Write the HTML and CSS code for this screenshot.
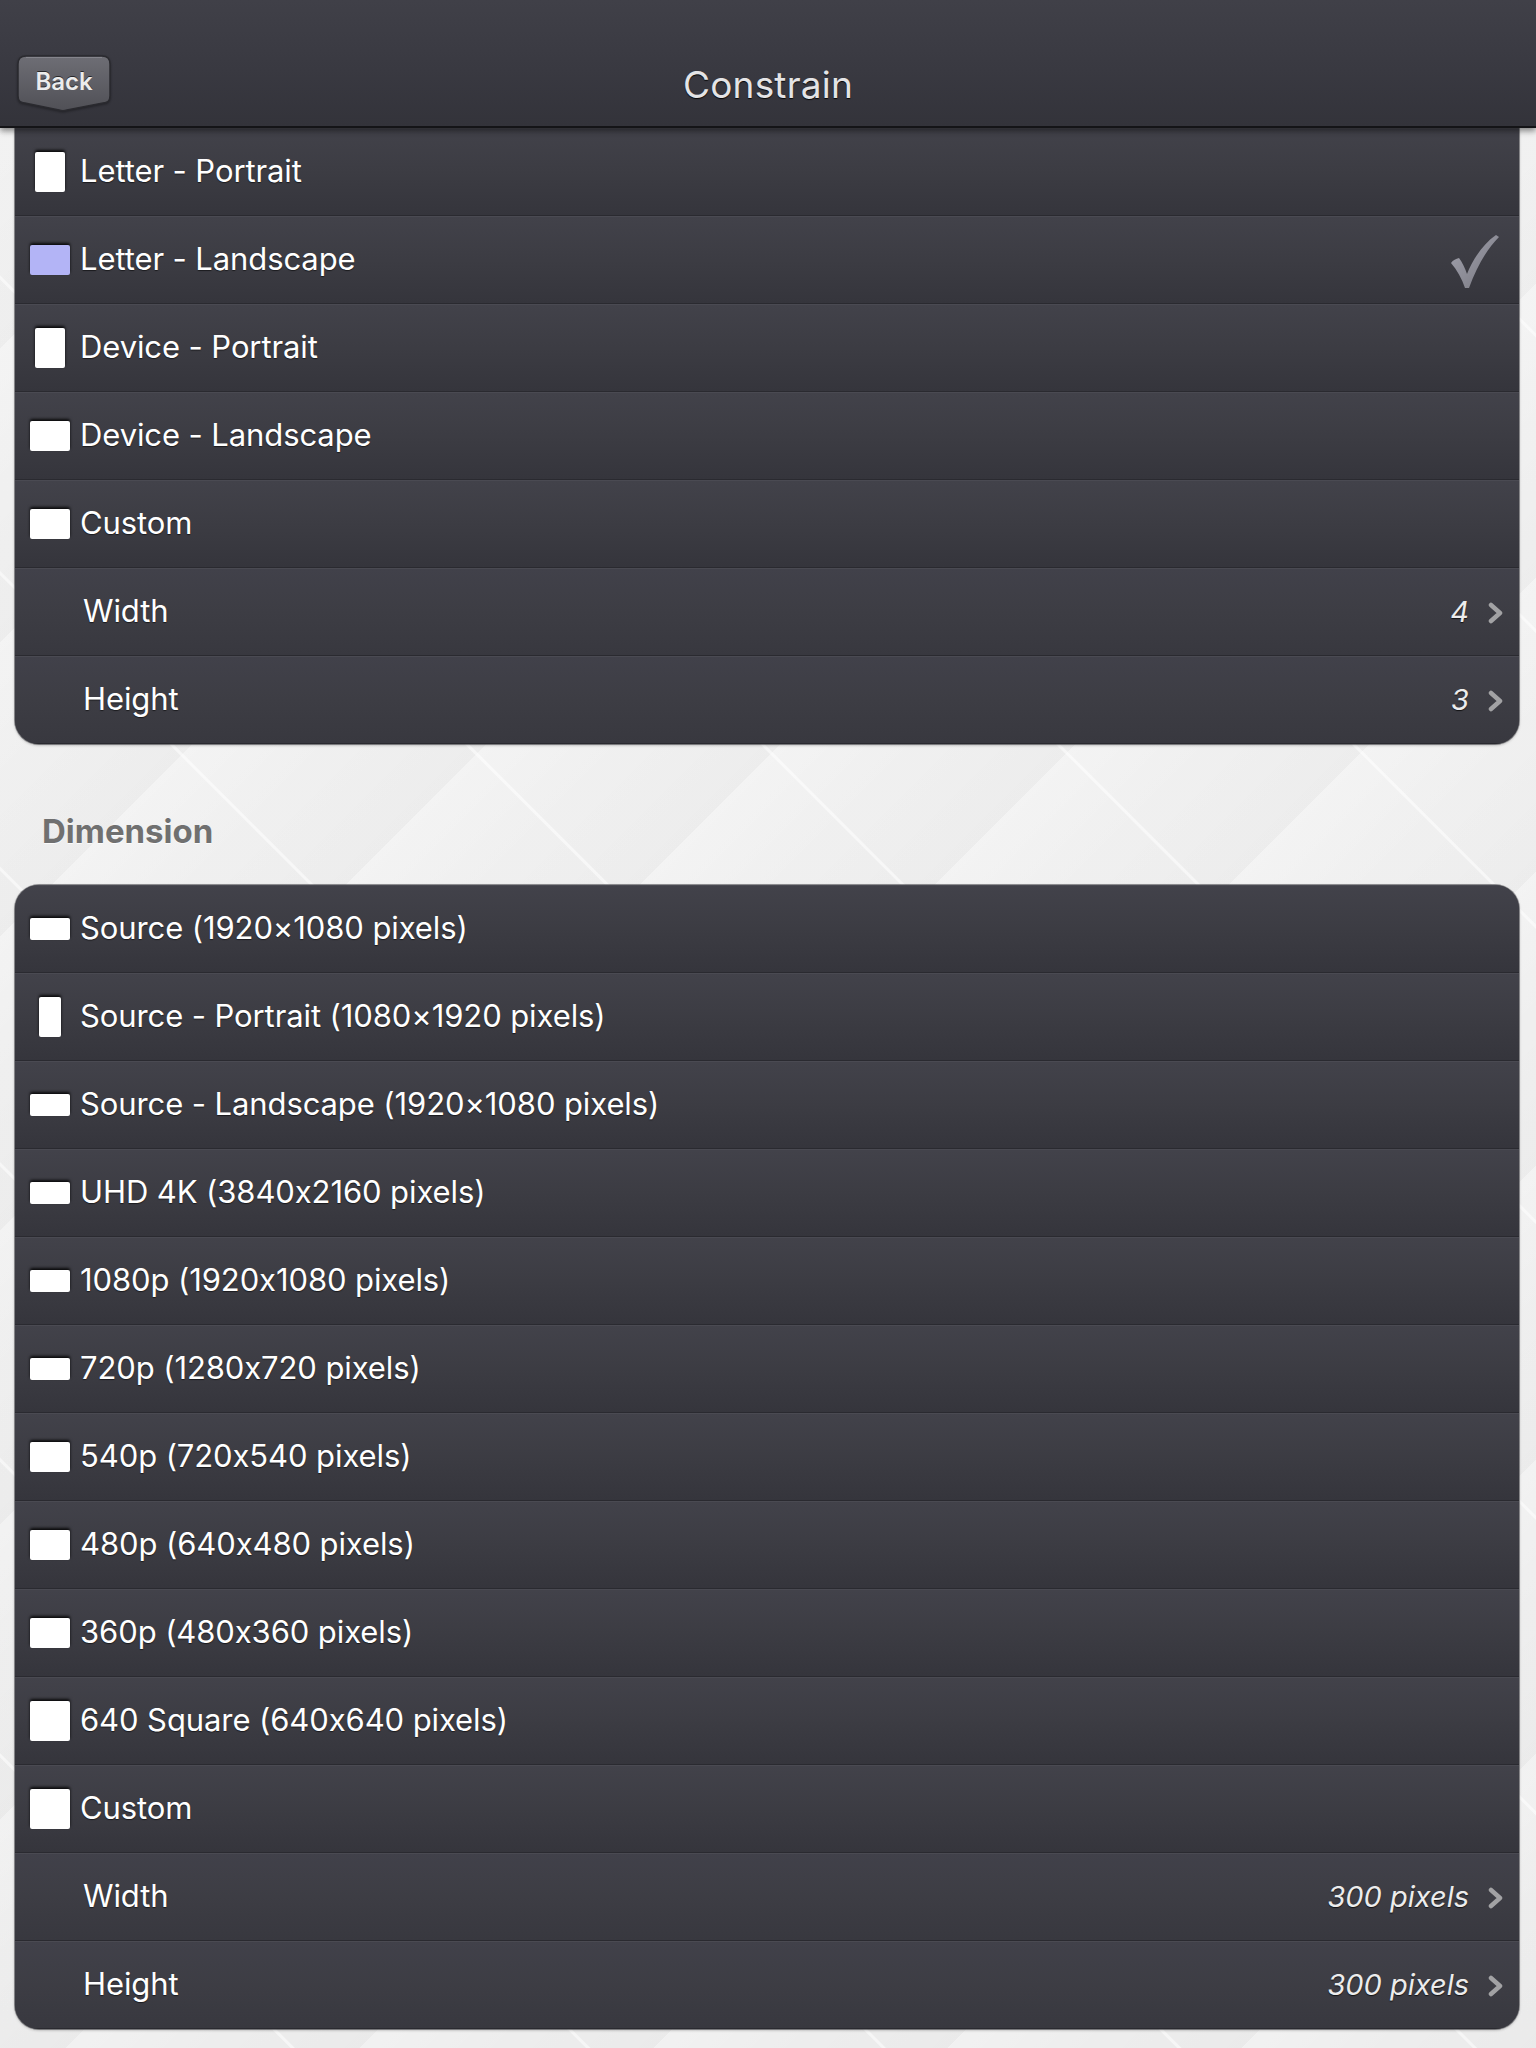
FILE: index.html
```html
<!DOCTYPE html>
<html lang="en">
<head>
<meta charset="utf-8">
<title>Constrain</title>
<link rel="stylesheet" href="styles.css">
</head>
<body>
<header class="navbar">
  <div class="nav-left">
    <button class="back-btn">
      <svg class="back-shape" width="94" height="58" viewBox="0 0 94 58">
        <defs>
          <linearGradient id="bg" x1="0" y1="0" x2="0" y2="1">
            <stop offset="0" stop-color="#6e6e75"/>
            <stop offset="1" stop-color="#505056"/>
          </linearGradient>
        </defs>
        <path d="M9,1 H85 Q93,1 93,9 V41 Q93,48 86,48 L50,55 Q46,56.5 42,55 L8,48 Q1,48 1,41 V9 Q1,1 9,1 Z" fill="url(#bg)" stroke="#2a2a2f" stroke-width="1.5"/>
        <path d="M9,2.5 H85" stroke="#85858c" stroke-width="1"/>
      </svg>
      <span class="back-label">Back</span>
    </button>
  </div>
  <h1 class="nav-title">Constrain</h1>
  <div class="nav-right"></div>
</header>

<main class="content">
  <section class="card card-top">
    <div class="row"><span class="icon"><i class="shape" style="width:30px;height:40px"></i></span><span class="label">Letter - Portrait</span></div>
    <div class="row"><span class="icon"><i class="shape selected" style="width:40px;height:30px"></i></span><span class="label">Letter - Landscape</span>
      <svg class="check" width="50" height="58" viewBox="0 0 50 58">
        <defs>
          <linearGradient id="cg" x1="0" y1="0" x2="1" y2="1">
            <stop offset="0" stop-color="#a4a4b0"/>
            <stop offset="1" stop-color="#77777f"/>
          </linearGradient>
        </defs>
        <path d="M2,31 C4,28 7,27 10,26 C13,30 16,36 18,42 C24,27 34,12 47,3 L50,5 C38,17 28,34 20,56 L16,56 C13,47 8,38 2,31 Z" fill="url(#cg)"/>
      </svg>
    </div>
    <div class="row"><span class="icon"><i class="shape" style="width:30px;height:40px"></i></span><span class="label">Device - Portrait</span></div>
    <div class="row"><span class="icon"><i class="shape" style="width:40px;height:30px"></i></span><span class="label">Device - Landscape</span></div>
    <div class="row"><span class="icon"><i class="shape" style="width:40px;height:30px"></i></span><span class="label">Custom</span></div>
    <div class="row row-value"><span class="label">Width</span><span class="value">4</span><svg class="chev" width="16" height="22" viewBox="0 0 16 22"><path d="M3,3 L12,11 L3,19" fill="none" stroke="#a2a2a4" stroke-width="4.5" stroke-linecap="round" stroke-linejoin="round"/></svg></div>
    <div class="row row-value"><span class="label">Height</span><span class="value">3</span><svg class="chev" width="16" height="22" viewBox="0 0 16 22"><path d="M3,3 L12,11 L3,19" fill="none" stroke="#a2a2a4" stroke-width="4.5" stroke-linecap="round" stroke-linejoin="round"/></svg></div>
  </section>

  <h2 class="section-title">Dimension</h2>

  <section class="card">
    <div class="row"><span class="icon"><i class="shape" style="width:40px;height:22px"></i></span><span class="label">Source (1920×1080 pixels)</span></div>
    <div class="row"><span class="icon"><i class="shape" style="width:22px;height:40px"></i></span><span class="label">Source - Portrait (1080×1920 pixels)</span></div>
    <div class="row"><span class="icon"><i class="shape" style="width:40px;height:22px"></i></span><span class="label">Source - Landscape (1920×1080 pixels)</span></div>
    <div class="row"><span class="icon"><i class="shape" style="width:40px;height:22px"></i></span><span class="label">UHD 4K (3840x2160 pixels)</span></div>
    <div class="row"><span class="icon"><i class="shape" style="width:40px;height:22px"></i></span><span class="label">1080p (1920x1080 pixels)</span></div>
    <div class="row"><span class="icon"><i class="shape" style="width:40px;height:22px"></i></span><span class="label">720p (1280x720 pixels)</span></div>
    <div class="row"><span class="icon"><i class="shape" style="width:40px;height:30px"></i></span><span class="label">540p (720x540 pixels)</span></div>
    <div class="row"><span class="icon"><i class="shape" style="width:40px;height:30px"></i></span><span class="label">480p (640x480 pixels)</span></div>
    <div class="row"><span class="icon"><i class="shape" style="width:40px;height:30px"></i></span><span class="label">360p (480x360 pixels)</span></div>
    <div class="row"><span class="icon"><i class="shape" style="width:40px;height:40px"></i></span><span class="label">640 Square (640x640 pixels)</span></div>
    <div class="row"><span class="icon"><i class="shape" style="width:40px;height:40px"></i></span><span class="label">Custom</span></div>
    <div class="row row-value"><span class="label">Width</span><span class="value">300 pixels</span><svg class="chev" width="16" height="22" viewBox="0 0 16 22"><path d="M3,3 L12,11 L3,19" fill="none" stroke="#a2a2a4" stroke-width="4.5" stroke-linecap="round" stroke-linejoin="round"/></svg></div>
    <div class="row row-value"><span class="label">Height</span><span class="value">300 pixels</span><svg class="chev" width="16" height="22" viewBox="0 0 16 22"><path d="M3,3 L12,11 L3,19" fill="none" stroke="#a2a2a4" stroke-width="4.5" stroke-linecap="round" stroke-linejoin="round"/></svg></div>
  </section>
</main>
</body>
</html>
```

FILE: styles.css
```css
* { box-sizing: border-box; }

html, body {
  margin: 0;
  padding: 0;
}

body {
  width: 1536px;
  min-height: 2048px;
  font-family: Inter, "Liberation Sans", sans-serif;
  font-feature-settings: "calt" 0;
  background-color: #efefef;
  background-image:
    repeating-linear-gradient(45deg, transparent 0, transparent 205px, rgba(255,255,255,0.55) 206px, rgba(255,255,255,0.55) 208px, transparent 209px),
    repeating-linear-gradient(-45deg, rgba(0,0,0,0.012) 0, transparent 104px, rgba(255,255,255,0.25) 208px),
    linear-gradient(180deg, #f1f1f1, #ededed);
  overflow: hidden;
}

/* ---------- Navigation bar ---------- */
.navbar {
  position: relative;
  z-index: 5;
  height: 128px;
  display: grid;
  grid-template-columns: 1fr auto 1fr;
  background: linear-gradient(180deg, #404048 0%, #393941 55%, #33333a 100%);
  border-bottom: 2px solid #141417;
  box-shadow: 0 3px 6px rgba(0, 0, 0, 0.45);
}

.nav-left {
  padding: 55px 0 0 17px;
}

.back-btn {
  position: relative;
  width: 94px;
  height: 58px;
  padding: 0;
  border: 0;
  background: transparent;
  display: block;
}

.back-shape {
  display: block;
  filter: drop-shadow(0 1px 1px rgba(0,0,0,0.35));
}

.back-label {
  position: absolute;
  left: 0;
  right: 0;
  top: 10px;
  text-align: center;
  font-family: Inter, "Liberation Sans", sans-serif;
  font-weight: 600;
  font-size: 24px;
  line-height: 34px;
  color: #ececec;
  text-shadow: 0 -1px 0 rgba(0,0,0,0.6);
}

.nav-title {
  margin: 0;
  padding-top: 63px;
  font-weight: 400;
  font-size: 37px;
  line-height: 44px;
  color: #e4e4e6;
  text-shadow: 0 1px 1px rgba(0,0,0,0.9);
  letter-spacing: 0.2px;
}

/* ---------- Cards ---------- */
.content {
  padding: 0 17px 0 15px;
}

.card {
  border-radius: 24px;
  overflow: hidden;
  background: #3a3a41;
  box-shadow: 0 0 0 1px rgba(70,70,75,0.55), 0 1px 3px rgba(0,0,0,0.35);
}

.card-top {
  border-radius: 0 0 24px 24px;
}

.row {
  height: 88px;
  display: flex;
  align-items: center;
  padding: 0 15px 0 15px;
  background: linear-gradient(180deg, #42424a 0%, #3c3c43 50%, #35353c 100%);
  border-top: 1px solid #4a4a52;
  border-bottom: 1px solid #2a2a30;
}

.row-value {
  background: linear-gradient(180deg, #41414a 0%, #3d3d44 50%, #38383f 100%);
}

.icon {
  width: 40px;
  height: 40px;
  flex: 0 0 40px;
  display: flex;
  align-items: center;
  justify-content: center;
  margin-right: 10px;
}

.shape {
  display: block;
  background: #ffffff;
  border-radius: 2px;
  box-shadow: 0 -2px 3px rgba(0,0,0,0.85);
}

.shape.selected {
  background: #b3b4f6;
}

.label {
  flex: 1 1 auto;
  font-size: 31px;
  line-height: 40px;
  letter-spacing: -0.1px;
  color: #ffffff;
  text-shadow: 0 1px 1px rgba(0,0,0,0.55);
  margin-top: -2px;
}

.row-value .label {
  padding-left: 53px;
}

.value {
  font-style: italic;
  font-size: 29px;
  line-height: 40px;
  color: #ececec;
  text-shadow: 0 1px 1px rgba(0,0,0,0.7);
  margin-right: 19px;
  margin-top: 0;
}

.chev {
  display: block;
  flex: 0 0 16px;
  margin-top: 2px;
}

.check {
  display: block;
  margin-right: 5px;
  margin-top: 2px;
}

/* ---------- Section title ---------- */
.section-title {
  margin: 67px 0 34px 27px;
  font-weight: 700;
  font-size: 33px;
  line-height: 40px;
  color: #707070;
  text-shadow: 0 1px 0 rgba(255,255,255,0.8);
}
```
